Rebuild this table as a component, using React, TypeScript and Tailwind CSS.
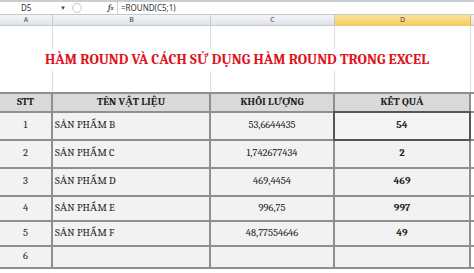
import React from 'react';

const cols = 'grid grid-cols-[53px_158px_124px_136px_3px]';

const rows = [
  { stt: '1', name: 'SẢN PHẨM B', kl: '53,6644435', kq: '54', h: 'h-[28px]', sel: true },
  { stt: '2', name: 'SẢN PHẨM C', kl: '1,742677434', kq: '2', h: 'h-[28px]' },
  { stt: '3', name: 'SẢN PHẨM D', kl: '469,4454', kq: '469', h: 'h-[28px]' },
  { stt: '4', name: 'SẢN PHẨM E', kl: '996,75', kq: '997', h: 'h-[25px]' },
  { stt: '5', name: 'SẢN PHẨM F', kl: '48,77554646', kq: '49', h: 'h-[25px]' },
  { stt: '6', name: '', kl: '', kq: '', h: 'h-[22px]' },
];

const GridLines = ({ className = '' }: { className?: string }) => (
  <div className={`${cols} ${className}`}>
    <div className="border-r border-[#dadcdd]" />
    <div className="border-r border-[#dadcdd]" />
    <div className="border-r border-[#dadcdd]" />
    <div className="border-r border-[#dadcdd]" />
    <div />
  </div>
);

export default function App() {
  return (
    <div className="w-[474px] h-[273px] overflow-hidden bg-white font-serif text-[#222]">
      {/* Formula bar */}
      <div className="h-[14px] flex items-center border-t-2 border-[#c9ccd1] bg-white font-sans text-[8px] text-[#333]">
        <div className="w-[60px] pl-[21px]">D5</div>
        <div className="w-[12px] text-[6px] text-[#444]">▼</div>
        <div className="w-[10px] h-[10px] rounded-full border border-[#c8c8c8]" />
        <div className="w-[26px]" />
        <div className="italic font-bold font-serif text-[8px] text-[#555] w-[8px]">
          f<span className="text-[6px]">x</span>
        </div>
        <div className="h-[12px] border-l border-[#d0d0d0] ml-[1px] pl-[3px] flex items-center">=ROUND(C5;1)</div>
      </div>

      {/* Column headers */}
      <div className={`${cols} h-[12px] bg-gradient-to-b from-[#f3f5f8] to-[#dfe3e8] border-y border-[#c5cad1] font-sans text-[7px] text-[#444]`}>
        <div className="flex items-center justify-center border-r border-[#c5cad1]">A</div>
        <div className="flex items-center justify-center border-r border-[#c5cad1]">B</div>
        <div className="flex items-center justify-center border-r border-[#c5cad1]">C</div>
        <div className="flex items-center justify-center bg-gradient-to-b from-[#fbe39a] to-[#f5c95a] border-r border-[#e0b04a]">D</div>
        <div />
      </div>

      <GridLines className="h-[22px]" />
      <div className="h-[22px] relative flex items-center justify-center pt-[2px]">
        <GridLines className="absolute inset-0" />
        <span className="relative bg-white px-[1px] text-[14.5px] font-bold text-[#e0141e]">
          HÀM ROUND VÀ CÁCH SỬ DỤNG HÀM ROUND TRONG EXCEL
        </span>
      </div>
      <GridLines className="h-[22px]" />

      {/* Table */}
      <div className="text-[10.5px]">
        <div className={`${cols} h-[21px] border-y-2 border-[#8f8f8f] bg-[#d9d9d9] font-bold`}>
          <div className="flex items-center justify-center border-r-2 border-[#8f8f8f]">STT</div>
          <div className="flex items-center justify-center border-r-2 border-[#8f8f8f]">TÊN VẬT LIỆU</div>
          <div className="flex items-center justify-center border-r-2 border-[#8f8f8f]">KHỐI LƯỢNG</div>
          <div className="flex items-center justify-center border-r-2 border-[#8f8f8f]">KẾT QUẢ</div>
          <div className="bg-white" />
        </div>
        {rows.map((r) => (
          <div key={r.stt} className={`${cols} ${r.h} border-b-2 border-[#8f8f8f] bg-[#f2f2f2]`}>
            <div className="flex items-center justify-center border-r-2 border-[#8f8f8f]">{r.stt}</div>
            <div className="flex items-center pl-[2px] border-r-2 border-[#8f8f8f]">{r.name}</div>
            <div className="flex items-center justify-center border-r-2 border-[#8f8f8f]">{r.kl}</div>
            <div
              className={`flex items-center justify-center font-bold border-r-2 ${
                r.sel ? 'border-2 border-[#555] -mt-[2px] -mb-[2px] -ml-[2px] bg-[#f4f4f4]' : 'border-[#8f8f8f]'
              }`}
            >
              {r.kq}
            </div>
            <div className="bg-white" />
          </div>
        ))}
      </div>
    </div>
  );
}
